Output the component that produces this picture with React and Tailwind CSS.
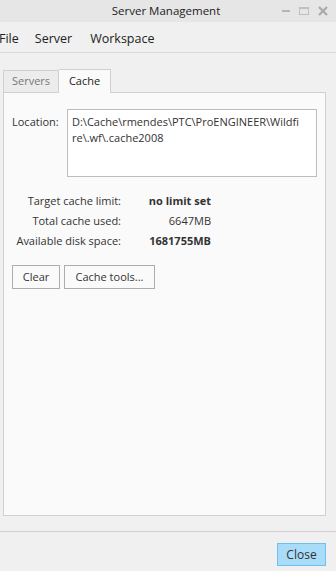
export default function App() {
  const font = { fontFamily: '"Open Sans", "Noto Sans", Arial, sans-serif' }
  return (
    <div className="w-[336px] h-[571px] bg-[#f0f0f0] flex flex-col text-[11px] text-[#333] overflow-hidden" style={font}>
      {/* title bar */}
      <div className="h-[22px] bg-[#e6e6e6] relative flex items-center justify-center shrink-0">
        <span className="text-[11.5px] text-[#222] ml-[-4px]">Server Management</span>
        <div className="absolute right-[8px] top-0 h-[22px] flex items-center gap-[9px]">
          <div className="w-[8px] h-[2px] bg-[#b5b5b5]" />
          <div className="w-[10px] h-[8px] border border-[#c0c0c0] border-t-[2px]" />
          <svg width="10" height="10" viewBox="0 0 10 10">
            <path d="M1 1 L9 9 M9 1 L1 9" stroke="#aaa" strokeWidth="2.2" />
          </svg>
        </div>
      </div>

      {/* menu bar */}
      <div className="h-[31px] flex items-center pt-[5px] border-b border-[#d9d9d9] text-[12.5px] text-[#222] shrink-0">
        <span className="ml-[-1px]">File</span>
        <span className="ml-[16px]">Server</span>
        <span className="ml-[18px]">Workspace</span>
      </div>

      {/* tabs */}
      <div className="flex flex-col px-[3px] mr-[7px] mt-[16px]">
        <div className="flex items-end h-[23px]">
          <div className="h-[22px] w-[56px] bg-[#ececec] border border-[#d0d0d0] border-b-0 flex items-center justify-center text-[#777]">
            Servers
          </div>
          <div className="h-[24px] w-[52px] bg-[#fafafa] border border-[#d0d0d0] border-b-0 border-l-0 flex items-center justify-center text-[#222] relative top-[1px]">
            Cache
          </div>
        </div>
        <div className="h-[424px] bg-[#fafafa] border border-[#d0d0d0] pl-[8px] pt-[16px]">
          <div className="flex">
            <span className="mt-[5px] w-[48px] text-[#333]">Location:</span>
            <div className="ml-[7px] w-[250px] h-[68px] bg-white border border-[#bdbdbd] px-[4px] pt-[4px] text-[#333] leading-[16px] whitespace-nowrap">
              D:\Cache\rmendes\PTC\ProENGINEER\Wildfi
              <br />
              re\.wf\.cache2008
            </div>
          </div>

          <div className="mt-[16px] grid grid-cols-[109px_90px] gap-y-[4px] leading-[16px]">
            <span className="text-right">Target cache limit:</span>
            <span className="text-right font-bold">no limit set</span>
            <span className="text-right">Total cache used:</span>
            <span className="text-right">6647MB</span>
            <span className="text-right">Available disk space:</span>
            <span className="text-right font-bold">1681755MB</span>
          </div>

          <div className="flex gap-[4px] mt-[16px]">
            <button className="w-[48px] h-[24px] bg-[#fafafa] border border-[#adadad] text-[#333]">Clear</button>
            <button className="w-[91px] h-[24px] bg-[#fafafa] border border-[#adadad] text-[#333]">Cache tools...</button>
          </div>
        </div>
      </div>

      {/* footer */}
      <div className="h-[39px] border-t border-[#d0d0d0] flex items-start pt-[11px] justify-end pr-[10px] shrink-0 mt-[15px]">
        <button className="w-[49px] h-[23px] bg-[#a8dcf8] border border-[#6cc2ec] text-[#333] text-[12px]">Close</button>
      </div>
    </div>
  )
}
